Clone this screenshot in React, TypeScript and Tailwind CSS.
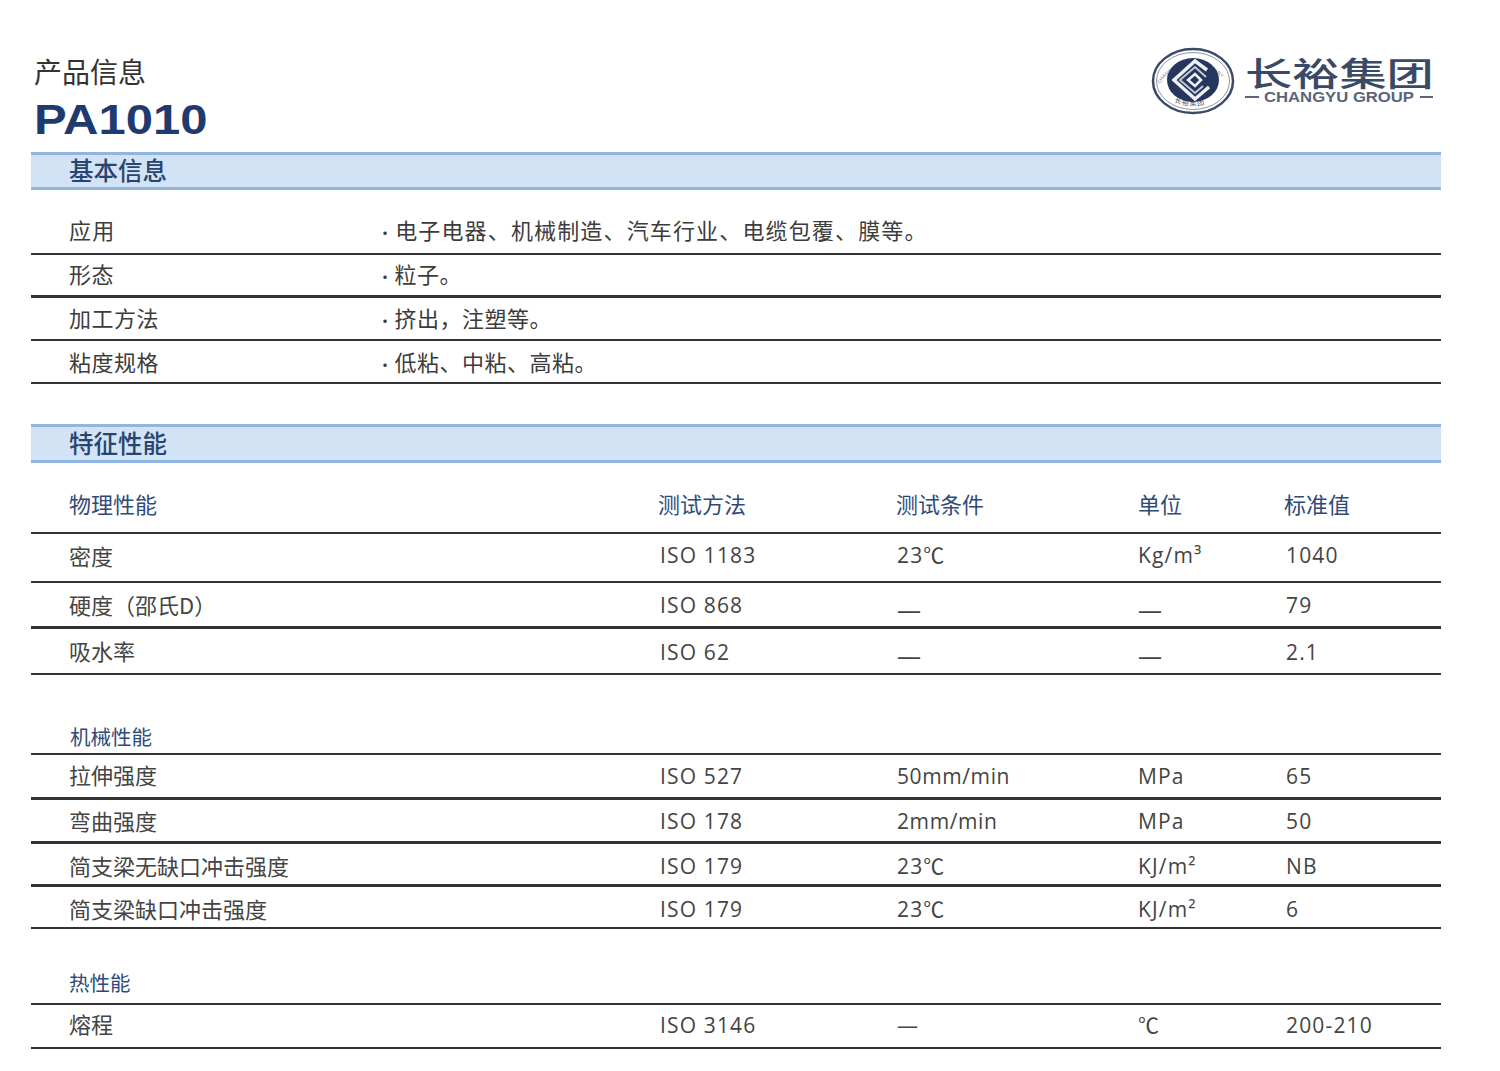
import React from "react";

const cjk = "font-['Noto_Sans_CJK_SC','Noto_Sans',sans-serif]";
const latin = "font-['Open_Sans','Noto_Sans_CJK_SC',sans-serif]";
const grid = "grid grid-cols-[591px_237px_241px_148px_1fr] items-center pl-[38px] border-b-2 border-[#333]";

function Band({ title, h }: { title: string; h: string }) {
  return (
    <div className={`${h} flex items-center pl-[38px] pb-[1px] bg-[#d2e3f5] border-y-[3px] border-[#8fb6e3] text-[#2a4470] font-medium text-[24.5px] ${cjk}`}>
      {title}
    </div>
  );
}

function InfoRow({ label, value, row }: { label: string; value: string; row: string }) {
  return (
    <div className={`flex items-center pl-[38px] border-[#333] ${row} ${cjk} text-[#3c3c3c]`}>
      <div className="w-[308px] text-[22px]">{label}</div>
      <div className="text-[22px] whitespace-nowrap">
        <span className="mr-[1px] text-[16px]">·</span>
        {value}
      </div>
    </div>
  );
}

function Dash() {
  return <span className="block pt-[7px] text-[24px] leading-[24px] text-[#444]">—</span>;
}

function Tight({ children }: { children: React.ReactNode }) {
  return <span className="tracking-[0.6px]">{children}</span>;
}

function DataRow({ cells, row, cell }: { cells: React.ReactNode[]; row: string; cell: string }) {
  return (
    <div className={`${grid} ${row} text-[#444] text-[21px]`}>
      <div className={`${cjk} text-[22px] whitespace-nowrap`}>{cells[0]}</div>
      {cells.slice(1).map((c, i) => (
        <div key={i} className={`${latin} ${cell} tracking-[1.15px] whitespace-nowrap`}>
          {c}
        </div>
      ))}
    </div>
  );
}

function Logo() {
  return (
    <div className="flex items-center gap-[10px]">
      <svg width="84" height="68" viewBox="0 0 84 68">
        <defs>
          <path id="ringTop" d="M7 42 A36 30 0 0 1 77 42" />
          <path id="ringBottom" d="M22 54 A35 27 0 0 0 62 54" />
        </defs>
        <ellipse cx="42" cy="34" rx="40" ry="32" fill="#fff" stroke="#3b4a66" strokeWidth="2.5" />
        <ellipse cx="42" cy="34" rx="36.5" ry="28.5" fill="none" stroke="#8d96a8" strokeWidth="1" />
        <text fontSize="5" fill="#6b7486" fontFamily="Liberation Sans, sans-serif">
          <textPath href="#ringTop" startOffset="6%">CHANGYU GROUP COMPANY</textPath>
        </text>
        <text fontSize="7" fill="#4a5468" fontFamily="Noto Sans CJK SC, sans-serif" letterSpacing="1">
          <textPath href="#ringBottom" startOffset="3%">长裕集团</textPath>
        </text>
        <ellipse cx="42" cy="33" rx="26" ry="22" fill="#26365f" />
        <path d="M56 23 L44 14 L23 33 L44 52 L58 40" fill="none" stroke="#eef0f4" strokeWidth="3.5" />
        <path d="M55 30 L44 20 L29 33 L44 46 L52 39" fill="none" stroke="#c3c9d5" strokeWidth="2" />
        <path d="M50 33 L44 27 L37 33 L44 39 Z" fill="#26365f" stroke="#eef0f4" strokeWidth="2.5" />
      </svg>
      <div className="w-[188px] flex flex-col">
        <div className={`${cjk} origin-left scale-x-[1.43] mb-[2px] text-[33px] leading-[30px] font-medium whitespace-nowrap text-[#3a4a66]`}>
          长裕集团
        </div>
        <div className="flex items-center justify-between h-[16px] text-[#5a6579]">
          <span className="w-[14px] h-[2px] bg-[#5a6579]" />
          <span className="font-['Liberation_Sans',sans-serif] font-bold text-[14px] leading-[16px] scale-x-[1.19] whitespace-nowrap">
            CHANGYU GROUP
          </span>
          <span className="w-[13px] h-[2px] bg-[#5a6579]" />
        </div>
      </div>
    </div>
  );
}

export default function App() {
  return (
    <div className="w-[1500px] h-[1071px] bg-white pl-[31px] pr-[59px] pt-[55px]">
      <div className="flex justify-between h-[97px]">
        <div className="pl-[3px]">
          <div className={`${cjk} text-[28px] leading-[32px] text-[#333]`}>产品信息</div>
          <div className="font-['Liberation_Sans',sans-serif] font-bold origin-left scale-x-[1.14] text-[43px] leading-[64px] text-[#1f3a6e]">
            PA1010
          </div>
        </div>
        <div className="pr-[8px] -mt-[8px] h-[70px]">
          <Logo />
        </div>
      </div>

      <Band title="基本信息" h="h-[38px]" />
      <div className="pt-[20px]">
        <InfoRow row="h-[45px] pb-[4px] border-b-2 tracking-[1.15px]" label="应用" value="电子电器、机械制造、汽车行业、电缆包覆、膜等。" />
        <InfoRow row="h-[43px] pb-[4px] border-b-[3px] tracking-[0.5px]" label="形态" value="粒子。" />
        <InfoRow row="h-[43px] pb-[2px] border-b-2 tracking-[0.5px]" label="加工方法" value="挤出，注塑等。" />
        <InfoRow row="h-[43px] border-b-2 tracking-[0.5px]" label="粘度规格" value="低粘、中粘、高粘。" />
      </div>

      <div className="pt-[40px]">
        <Band title="特征性能" h="h-[39px]" />
      </div>

      <div className={`${grid} h-[71px] pt-[11px] text-[22px] text-[#2f4a7a] ${cjk}`}>
        <div>物理性能</div>
        <div className="-ml-[2px]">测试方法</div>
        <div className="-ml-[1px]">测试条件</div>
        <div>单位</div>
        <div className="-ml-[2px]">标准值</div>
      </div>
      <DataRow row="h-[49px] pb-[5px]" cell="pt-[2px]" cells={["密度", "ISO 1183", "23℃", "Kg/m³", "1040"]} />
      <DataRow row="h-[46px] border-b-[3px]" cell="pt-[3px]" cells={["硬度（邵氏D）", "ISO 868", <Dash />, <Dash />, "79"]} />
      <DataRow row="h-[46px] pb-[2px]" cell="pt-[5px]" cells={["吸水率", "ISO 62", <Dash />, <Dash />, "2.1"]} />

      <div className={`flex items-end pl-[39px] h-[80px] pb-[1px] border-b-2 border-[#333] text-[20.5px] text-[#2f4a7a] ${cjk}`}>机械性能</div>
      <DataRow row="h-[45px] pb-[3px] border-b-[3px]" cell="pt-[4px]" cells={["拉伸强度", "ISO 527", <Tight>50mm/min</Tight>, "MPa", "65"]} />
      <DataRow row="h-[44px] border-b-[3px]" cell="pt-[3px]" cells={["弯曲强度", "ISO 178", <Tight>2mm/min</Tight>, "MPa", "50"]} />
      <DataRow row="h-[43px] border-b-[3px] pt-[2px]" cell="pt-[4px]" cells={["简支梁无缺口冲击强度", "ISO 179", "23℃", "KJ/m²", "NB"]} />
      <DataRow row="h-[42px] pt-[3px]" cell="pt-[2px]" cells={["简支梁缺口冲击强度", "ISO 179", "23℃", "KJ/m²", "6"]} />

      <div className={`flex items-end pl-[38px] h-[76px] pb-[5px] border-b-2 border-[#333] text-[20.5px] text-[#2f4a7a] ${cjk}`}>热性能</div>
      <DataRow row="h-[44px] pb-[6px]" cell="pt-[5px]" cells={["熔程", "ISO 3146", "—", "℃", "200-210"]} />
    </div>
  );
}
